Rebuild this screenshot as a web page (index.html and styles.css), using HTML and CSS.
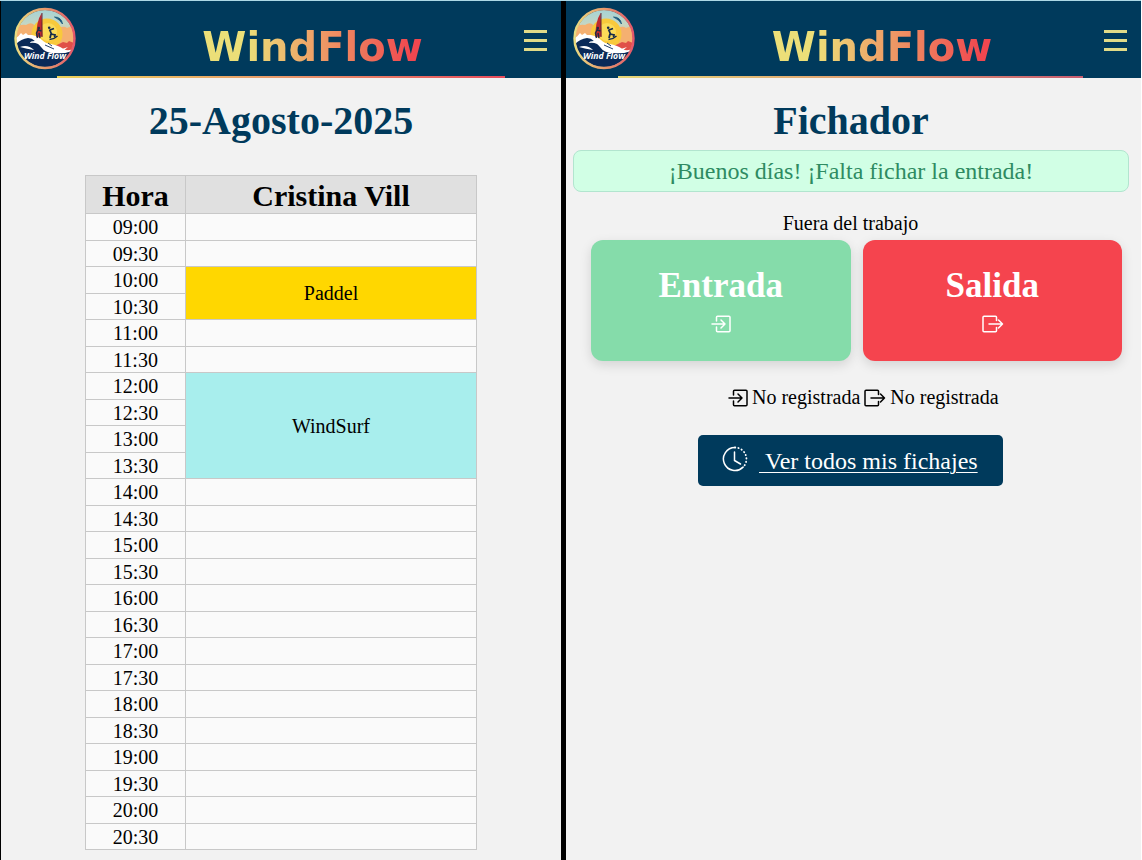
FILE: index.html
```html
<!DOCTYPE html>
<html lang="es">
<head>
<meta charset="utf-8">
<title>WindFlow</title>
<link rel="stylesheet" href="styles.css">
</head>
<body>
<svg class="defs" width="0" height="0">
  <defs>
    <linearGradient id="ring" x1="0" x2="1"><stop offset="0" stop-color="#e9dc80"/><stop offset=".5" stop-color="#e79a6c"/><stop offset="1" stop-color="#e2566a"/></linearGradient>
    <linearGradient id="sky" x1="0" y1="0" x2="0" y2="1"><stop offset="0" stop-color="#a5d3d5"/><stop offset=".25" stop-color="#c4d6c4"/><stop offset=".5" stop-color="#f2b67c"/></linearGradient>
    <clipPath id="disc"><circle cx="31" cy="31.500" r="28.800"/></clipPath>
    <symbol id="logo" viewBox="0 0 62 63">
      <circle cx="31" cy="31.500" r="28.500" fill="url(#sky)"/>
      <g clip-path="url(#disc)">
        <path d="M2 20q5-3 10-2 6-4 9 1v14H2zM44 22q5-4 9-1 4-2 7 0v18H44z" fill="#f5b070"/>
        <circle cx="33" cy="27" r="15.500" fill="#f8c93c"/>
        <circle cx="34" cy="25" r="9" fill="#fbdb58"/>
        <path d="M38 40l7-3 4-2 4 1 2-2 5 2v9H38z" fill="#e04f48"/>
        <path d="M2 31q3-2 5-5l2 2 3-2 2 2 4 0q6 1 10 5 4 4 9 4 9 2 12 5 6 3 12-1v22H2z" fill="#fff"/>
        <path d="M2 37q5-5 12-6 4 0 7 3-5 0-5 2 8-1 13 5 5 5 12 5 10 1 20-3v20H2z" fill="#0a2a58"/>
        <path d="M20 33q6 2 10 6 6 4 14 3 6 0 10-2-6 6-14 6-9 0-13-6-3-4-7-7zM6 40q8-3 14 3-7-1-14-3z" fill="#fff"/>
        <path d="M31 38l9 4M34 36l4 3" stroke="#0a2a58" stroke-width=".9"/>
        <path d="M27.600 6Q22 15 22.500 30l6-.5z" fill="#bd2a32"/>
        <path d="M28 6v24" stroke="#57202f" stroke-width=".9"/>
        <path d="M24.500 22l-2 4 1 5M24.500 23l3 1M25 26l1 5" stroke="#202c48" stroke-width="1.500" fill="none"/>
        <circle cx="24.800" cy="21" r="1.300" fill="#202c48"/>
        <path d="M35.500 22.500l2 4.500M36 23l4-1.500M37 27l-1 4M37 27l4 1-.5 2" stroke="#162b4b" stroke-width="1.800" fill="none"/>
        <path d="M35.500 32.500q5-.5 8-3.500" stroke="#162b4b" stroke-width="1.300" fill="none"/>
        <circle cx="35.200" cy="20.700" r="1.300" fill="#162b4b"/>
        <path d="M40.500 10q7 0 8 7-2-4-8-7z" fill="#17577c" stroke="#17577c" stroke-width=".8"/>
      </g>
      <circle cx="31" cy="31.500" r="29.500" fill="none" stroke="url(#ring)" stroke-width="2.400"/>
      <text x="31" y="52" text-anchor="middle" textLength="42" lengthAdjust="spacingAndGlyphs" class="logo-text">Wind Flow</text>
    </symbol>
    <symbol id="login" viewBox="0 0 20 18">
      <path d="M5.500 6V2.200q0-1 1-1H18q1 0 1 1v13.600q0 1-1 1H6.500q-1 0-1-1V12M1 9h13M10 5l4 4-4 4"/>
    </symbol>
    <symbol id="logout" viewBox="0 0 22 18">
      <path d="M14.500 5.500V2.200q0-1-1-1H2q-1 0-1 1v13.600q0 1 1 1h11.500q1 0 1-1V12.500M7 9h13.500M16.500 5l4 4-4 4"/>
    </symbol>
  </defs>
</svg>
<main class="screens">
  <section class="screen agenda">
    <header class="bar">
      <svg class="logo"><use href="#logo"/></svg>
      <div class="brand">WindFlow</div>
      <div class="menu"><i></i><i></i><i></i></div>
      <div class="rule"></div>
    </header>
    <h1>25-Agosto-2025</h1>
    <div class="table">
      <div class="hours">
        <div class="th">Hora</div>
        <div>09:00</div><div>09:30</div><div>10:00</div><div>10:30</div>
        <div>11:00</div><div>11:30</div><div>12:00</div><div>12:30</div>
        <div>13:00</div><div>13:30</div><div>14:00</div><div>14:30</div>
        <div>15:00</div><div>15:30</div><div>16:00</div><div>16:30</div>
        <div>17:00</div><div>17:30</div><div>18:00</div><div>18:30</div>
        <div>19:00</div><div>19:30</div><div>20:00</div><div>20:30</div>
      </div>
      <div class="slots">
        <div class="th">Cristina Vill</div>
        <div></div><div></div>
        <div class="paddel">Paddel</div>
        <div></div><div></div>
        <div class="windsurf">WindSurf</div>
        <div></div><div></div><div></div><div></div><div></div><div></div><div></div>
        <div></div><div></div><div></div><div></div><div></div><div></div><div></div>
      </div>
    </div>
  </section>
  <section class="screen clocking">
    <header class="bar">
      <svg class="logo"><use href="#logo"/></svg>
      <div class="brand">WindFlow</div>
      <div class="menu"><i></i><i></i><i></i></div>
      <div class="rule"></div>
    </header>
    <h1>Fichador</h1>
    <div class="notice">¡Buenos días! ¡Falta fichar la entrada!</div>
    <div class="state">Fuera del trabajo</div>
    <div class="cards">
      <div class="card in"><b>Entrada</b><svg class="icon" width="20" height="18"><use href="#login"/></svg></div>
      <div class="card out"><b>Salida</b><svg class="icon" width="22" height="18"><use href="#logout"/></svg></div>
    </div>
    <div class="records">
      <svg class="icon" width="20" height="18"><use href="#login"/></svg><span>No registrada</span>
      <svg class="icon" width="22" height="18"><use href="#logout"/></svg><span>No registrada</span>
    </div>
    <a class="all">
      <svg class="clock" width="26" height="26" viewBox="0 0 26 26"><path d="M13 1.500a11.500 11.500 0 1 0 8.100 19.600"/><path class="dots" d="M13 1.500a11.500 11.500 0 0 1 8.100 19.600"/><path d="M12.500 6v8.500l6 3.500"/></svg>
      <span>&nbsp;Ver todos mis fichajes</span>
    </a>
  </section>
</main>
</body>
</html>
```
FILE: styles.css
```css
* { box-sizing: border-box; }
body { margin: 0; background: #fff; color: #000; font: 20px/23px "Liberation Serif", "Times New Roman", serif; overflow: hidden; }
.defs { position: absolute; }
.screens { display: flex; width: 1141px; height: 860px; border-top: 1px solid #add8e6; background: #000; padding-left: 1px; gap: 5px; }
.screen { background: #f2f2f2; height: 859px; display: flex; flex-direction: column; }
.agenda { width: 560px; }
.clocking { width: 575px; }
.bar { position: relative; flex: none; display: flex; justify-content: space-between; height: 77px; background: #003a5c; padding: 6px 14px 0 13px; }
.clocking .bar { padding-left: 7px; }
.logo { width: 62px; height: 63px; }
.logo-text { font: italic bold 8px "Open Sans", "DejaVu Sans", sans-serif; fill: #fff; }
.brand { height: 48px; margin: 16px 0 0 25px; font: bold 40px/48px "DejaVu Sans", Verdana, sans-serif; background: linear-gradient(90deg, #ecdf78 20%, #f0474f 95%); -webkit-background-clip: text; background-clip: text; color: transparent; }
.clocking .brand { margin-left: 25px; }
.menu { display: flex; flex-direction: column; gap: 6.5px; padding-top: 23px; width: 23px; }
.menu i { height: 2.5px; background: #e0da88; }
.rule { position: absolute; bottom: 0; left: 10%; width: 80%; height: 2px; background: linear-gradient(90deg, #ecd25a, #e8986a 50%, #e84c5c); }
.clocking .rule { left: 52px; width: 465px; background: linear-gradient(90deg, #e6d878, #e0a070 50%, #c85c70); }
h1 { margin: 20px 0 0; font-size: 40px; line-height: 46px; color: #003a5c; text-align: center; }
.clocking h1 { padding-right: 5px; }
.table { width: 392px; margin: 31px 0 0 84px; display: grid; grid-template-columns: 100px 291px; border: solid #c8c8c8; border-width: 0 1px 1px 0; background: #fafafa; }
.hours, .slots { display: grid; grid-template-rows: 38px repeat(12, 27px 26px); text-align: center; }
.hours > div, .slots > div { border: solid #c8c8c8; border-width: 1px 0 0 1px; display: flex; align-items: center; justify-content: center; padding-top: 1px; }
.table .th { background: #e0e0e0; font-size: 30px; font-weight: bold; }
.slots .paddel { grid-row: span 2; background: #ffd700; }
.slots .windsurf { grid-row: span 4; background: #a8eeed; padding-top: 2px; }
.notice { margin: 6px 12px 0 7px; height: 42px; border: 1px solid #b2e5cf; border-radius: 8px; background: #d1ffe5; color: #2e8b62; font-size: 24px; line-height: 41px; text-align: center; }
.state { margin-top: 20px; text-align: center; padding-right: 6px; }
.cards { display: flex; gap: 12px; margin: 5px 19px 0 25px; }
.card { flex: 1; height: 121px; border-radius: 12px; color: #fff; display: flex; flex-direction: column; align-items: center; box-shadow: 0 4px 12px rgba(0, 0, 0, .13); padding-top: 26px; }
.card b { font-size: 35px; line-height: 40px; }
.card .icon { margin: 9px 0 0 1px; }
.in { background: #85dcaa; }
.out { background: #f5444e; }
.icon, .clock { flex: none; fill: none; stroke: currentColor; stroke-width: 1.5; stroke-linecap: round; stroke-linejoin: round; }
.records { display: flex; align-items: center; gap: 4px; margin: 25px 0 0 162px; white-space: nowrap; }
.all { align-self: flex-start; display: flex; align-items: center; width: 305px; height: 51px; margin: 26px 0 0 132px; padding-left: 24px; background: #003a5c; border-radius: 5px; color: #fff; font-size: 24px; line-height: 28px; }
.all .clock { margin-top: -3px; }
.all span { margin-left: 11px; text-decoration: underline; text-decoration-thickness: 1px; text-underline-offset: 3px; white-space: nowrap; }
.dots { stroke-width: 1.8; stroke-dasharray: .3 3.1; }
```
